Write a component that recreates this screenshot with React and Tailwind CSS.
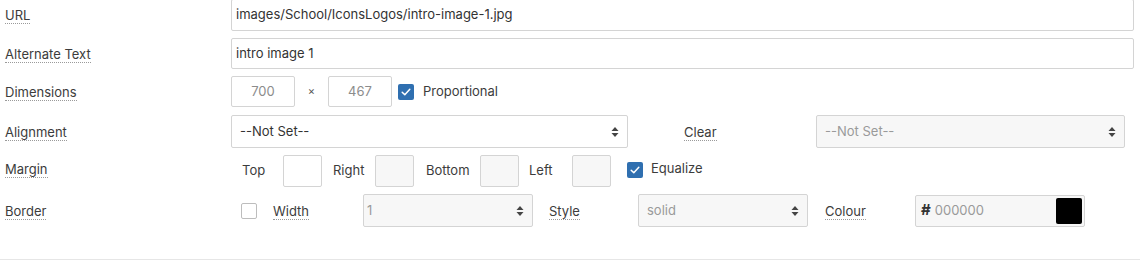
import React from 'react';

const font = { fontFamily: 'Inter, "Noto Sans", sans-serif' };

function Label({ children }) {
    return (
        <span className="border-b border-dotted border-[#9a9a9a] leading-[15px] text-[13px] text-[#3c3c3c]">
            {children}
        </span>
    );
}

function Arrows() {
    return (
        <svg width="8" height="12" viewBox="0 0 8 12" className="shrink-0">
            <path d="M4 1 L7.5 5 L0.5 5 Z" fill="#444" />
            <path d="M4 11 L7.5 7 L0.5 7 Z" fill="#444" />
        </svg>
    );
}

function Select({ value, disabled, className }) {
    return (
        <div className={`flex items-center justify-between rounded-[2px] border border-[#d4d4d4] pr-[8px] text-[13px] ${disabled ? 'bg-[#f7f7f7] text-[#9a9a9a]' : 'bg-white text-[#333]'} ${className}`}>
            <span>{value}</span>
            <Arrows />
        </div>
    );
}

function Check({ checked }) {
    if (checked) {
        return (
            <span className="flex h-4 w-4 shrink-0 items-center justify-center rounded-[2px] bg-[#2f6fb0]">
                <svg width="12" height="12" viewBox="0 0 12 12">
                    <path d="M2.2 6.2 L4.8 8.8 L9.8 3.2" fill="none" stroke="white" strokeWidth="1.5" strokeLinecap="round" strokeLinejoin="round" />
                </svg>
            </span>
        );
    }
    return <span className="block h-4 w-4 shrink-0 rounded-[2px] border border-[#bdbdbd] bg-white" />;
}

function Box({ disabled }) {
    return <div className={`h-[32px] w-[39px] shrink-0 rounded-[2px] border border-[#d4d4d4] ${disabled ? 'bg-[#f7f7f7]' : 'bg-white'}`} />;
}

export default function App() {
    return (
        <div className="w-[1140px] h-[261px] overflow-hidden bg-white" style={font}>
            <div className="mt-[-1px] flex flex-col border-b border-[#e6e6e6] pb-[32px]">
                {/* URL */}
                <div className="flex h-[32px] items-center">
                    <div className="w-[231px] pl-[5px] mb-[2px]"><Label>URL</Label></div>
                    <div className="flex h-[32px] w-[903px] items-center rounded-[2px] border border-[#d4d4d4] pl-[4px] text-[13px] text-[#333]">
                        images/School/IconsLogos/intro-image-1.jpg
                    </div>
                </div>

                {/* Alternate text */}
                <div className="mt-[7px] flex h-[31px] items-center">
                    <div className="w-[231px] pl-[5px] mb-[2px]"><Label>Alternate Text</Label></div>
                    <div className="flex h-[31px] w-[903px] items-center rounded-[2px] border border-[#d4d4d4] pl-[4px] text-[13px] text-[#333]">
                        intro image 1
                    </div>
                </div>

                {/* Dimensions */}
                <div className="mt-[7px] flex h-[31px] items-center">
                    <div className="w-[231px] pl-[5px] mb-[2px]"><Label>Dimensions</Label></div>
                    <div className="flex h-[31px] w-[64px] items-center justify-center rounded-[2px] border border-[#d4d4d4] text-[13px] text-[#8c8c8c]">700</div>
                    <div className="w-[33px] text-center text-[11px] text-[#555]">×</div>
                    <div className="flex h-[31px] w-[64px] items-center justify-center rounded-[2px] border border-[#d4d4d4] text-[13px] text-[#8c8c8c]">467</div>
                    <div className="ml-[6px]"><Check checked /></div>
                    <span className="ml-[9px] text-[13px] text-[#3c3c3c]">Proportional</span>
                </div>

                {/* Alignment */}
                <div className="mt-[8px] flex h-[33px] items-center">
                    <div className="w-[231px] pl-[5px] mb-[2px]"><Label>Alignment</Label></div>
                    <Select value="--Not Set--" className="h-[33px] w-[397px] pl-[8px]" />
                    <div className="w-[188px] pl-[56px] mb-[2px]"><Label>Clear</Label></div>
                    <Select value="--Not Set--" disabled className="h-[33px] w-[309px] pl-[8px]" />
                </div>

                {/* Margin */}
                <div className="mt-[7px] flex h-[32px] items-center text-[13px] text-[#3c3c3c]">
                    <div className="w-[231px] pl-[5px] mb-[2px]"><Label>Margin</Label></div>
                    <div className="w-[52px] pl-[11px]">Top</div>
                    <Box />
                    <div className="w-[53px] pl-[11px]">Right</div>
                    <Box disabled />
                    <div className="w-[66px] pl-[12px]">Bottom</div>
                    <Box disabled />
                    <div className="w-[53px] pl-[10px]">Left</div>
                    <Box disabled />
                    <div className="ml-[16px] mb-[2px]"><Check checked /></div>
                    <span className="ml-[8px] mb-[4px]">Equalize</span>
                </div>

                {/* Border */}
                <div className="mt-[7px] flex h-[33px] items-center">
                    <div className="w-[231px] pl-[5px] mb-[2px]"><Label>Border</Label></div>
                    <div className="ml-[10px]"><Check /></div>
                    <div className="w-[106px] pl-[16px] mb-[2px]"><Label>Width</Label></div>
                    <Select value="1" disabled className="h-[33px] w-[170px] pl-[3px]" />
                    <div className="w-[105px] pl-[16px] mb-[2px]"><Label>Style</Label></div>
                    <Select value="solid" disabled className="h-[33px] w-[170px] pl-[8px]" />
                    <div className="w-[107px] pl-[17px] mb-[2px]"><Label>Colour</Label></div>
                    <div className="flex h-[32px] w-[170px] items-center rounded-[2px] border border-[#d4d4d4] bg-[#f7f7f7] pl-[5px] pr-[2px] text-[13px]">
                        <span className="text-[15px] font-bold text-[#333]">#</span>
                        <span className="ml-[4px] text-[#9a9a9a]">000000</span>
                        <span className="ml-auto h-[26px] w-[26px] rounded-[2px] bg-black" />
                    </div>
                </div>
            </div>
        </div>
    );
}
